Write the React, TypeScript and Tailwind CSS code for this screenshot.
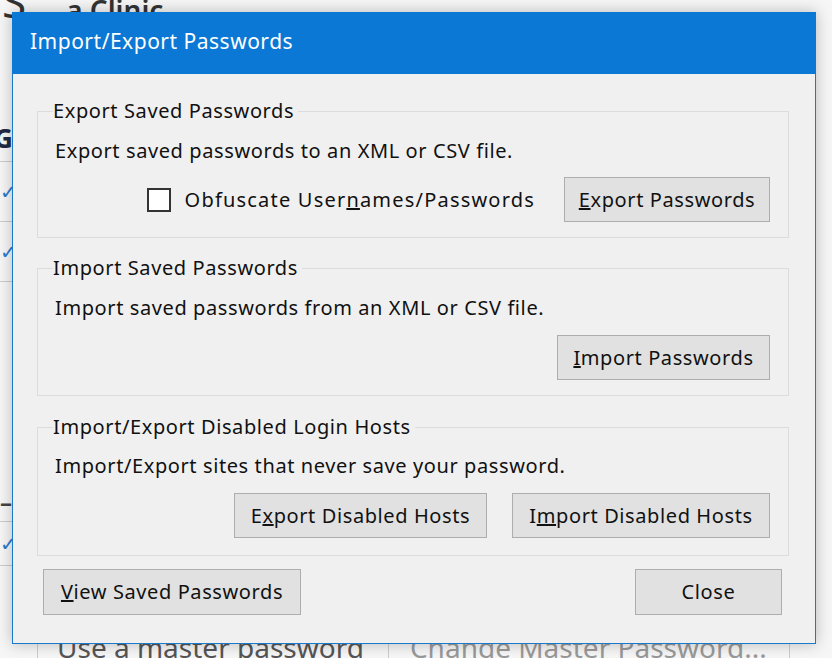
const font = { fontFamily: '"Noto Sans", "Open Sans", sans-serif' };

function Btn({ children, w }: { children: React.ReactNode; w: string }) {
  return (
    <button
      className={`h-[45px] ${w} border border-[#adadad] bg-[#e1e1e1] text-[20px] tracking-[0.6px] leading-none text-[#111] shrink-0`}
    >
      {children}
    </button>
  );
}

function Group({ title, children, pb }: { title: string; children: React.ReactNode; pb: string }) {
  return (
    <fieldset className={`border border-[#dcdcdc] pl-[17px] pr-[18px] ${pb}`}>
      <legend className="-ml-[2px] px-0 pr-[4px] text-[20px] tracking-[0.6px] leading-[24px] text-[#111]">{title}</legend>
      {children}
    </fieldset>
  );
}

export default function App() {
  return (
    <div className="relative w-[832px] h-[658px] overflow-hidden bg-[#f6f6f6]" style={font}>
      {/* window behind */}
      <div className="absolute left-0 top-0 w-[832px] h-[658px] text-[#444]">
        <div className="flex items-end gap-10 -mt-[24px] pl-[2px] whitespace-nowrap">
          <span className="text-[44px] leading-[50px] text-[#333]">S</span>
          <span className="text-[28px] leading-[32px] text-[#333] font-semibold">a Clinic</span>
        </div>
        <div className="flex flex-col w-[14px] mt-[88px] overflow-hidden">
          <div className="h-[48px] border-b border-[#ccc] text-[26px] font-bold text-[#1f2a44] leading-[48px] -ml-[6px]">G</div>
          <div className="h-[60px] border-b border-[#ccc] text-[#2a7bd0] text-[20px] leading-[60px]">✓</div>
          <div className="h-[60px] border-b border-[#ccc] text-[#2a7bd0] text-[20px] leading-[60px]">✓</div>
          <div className="h-[200px]" />
          <div className="h-[40px] border-b border-[#ccc] text-[24px] font-bold leading-[40px]">–</div>
          <div className="h-[44px] border-b border-[#ccc] text-[#2a7bd0] text-[20px] leading-[44px]">✓</div>
        </div>
        <div className="absolute left-[37px] top-[630px] flex items-center whitespace-nowrap text-[28px] leading-[34px]">
          <span className="pl-[19px] pr-[24px] border-l border-r border-[#ccc] text-[#555]">Use a master password</span>
          <span className="pl-[21px] pr-[22px] border-r border-[#ccc] text-[#999]">Change Master Password...</span>
        </div>
      </div>

      {/* dialog */}
      <div className="absolute left-[12px] top-[12px] w-[804px] h-[632px] border border-[#1979ca] bg-[#f0f0f0] shadow-[0_0_14px_rgba(0,0,0,0.25)] flex flex-col">
        <div className="h-[62px] -mt-px -mx-px bg-[#0a78d4] flex items-center pl-[18px] pb-[2px] text-[21px] tracking-[0.5px] text-white">
          Import/Export Passwords
        </div>
        <div className="flex flex-col pt-[25px] pl-[24px] pr-[26px]">
          <Group title="Export Saved Passwords" pb="pb-[15px]">
            <div className="mt-[16px] text-[20px] tracking-[0.6px] leading-[24px] text-[#111]">Export saved passwords to an XML or CSV file.</div>
            <div className="mt-[14px] flex items-center justify-end">
              <div className="w-[24px] h-[24px] border-2 border-[#333] bg-white" />
              <span className="ml-[14px] mr-[29px] text-[20px] tracking-[1.2px] text-[#111] whitespace-nowrap">
                Obfuscate User<u>n</u>ames/Passwords
              </span>
              <Btn w="w-[206px]"><u>E</u>xport Passwords</Btn>
            </div>
          </Group>
          <div className="h-[18px]" />
          <Group title="Import Saved Passwords" pb="pb-[15px]">
            <div className="mt-[16px] text-[20px] tracking-[0.6px] leading-[24px] text-[#111]">Import saved passwords from an XML or CSV file.</div>
            <div className="mt-[15px] flex justify-end">
              <Btn w="w-[213px]"><u>I</u>mport Passwords</Btn>
            </div>
          </Group>
          <div className="h-[19px]" />
          <Group title="Import/Export Disabled Login Hosts" pb="pb-[17px]">
            <div className="mt-[15px] text-[20px] tracking-[0.6px] leading-[24px] text-[#111]">Import/Export sites that never save your password.</div>
            <div className="mt-[15px] flex justify-end gap-[25px]">
              <Btn w="w-[253px]">E<u>x</u>port Disabled Hosts</Btn>
              <Btn w="w-[258px]">I<u>m</u>port Disabled Hosts</Btn>
            </div>
          </Group>
        </div>
        <div className="mt-[13px] flex justify-between pl-[30px] pr-[33px]">
          <Btn w="w-[258px] h-[46px]"><u>V</u>iew Saved Passwords</Btn>
          <Btn w="w-[147px] h-[46px]">Close</Btn>
        </div>
      </div>
    </div>
  );
}
